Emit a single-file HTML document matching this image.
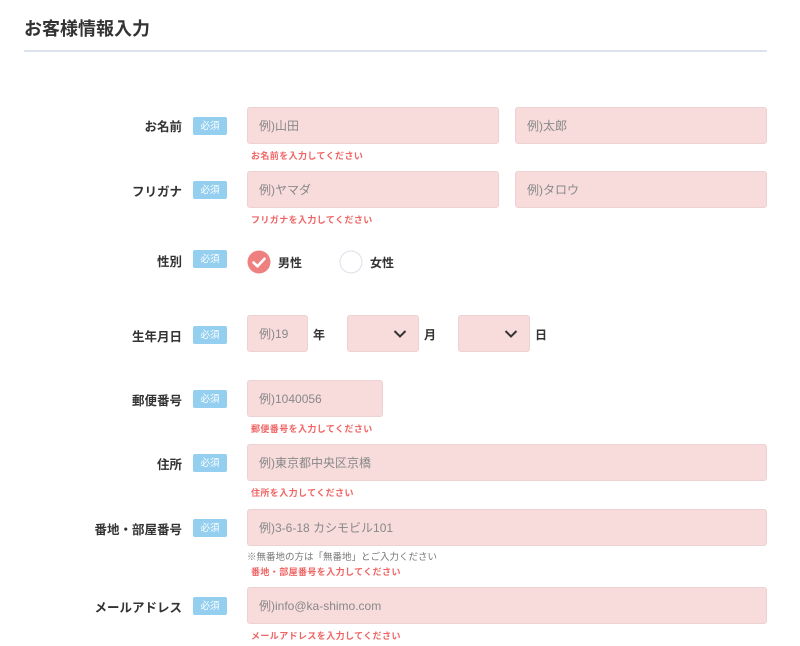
<!DOCTYPE html>
<html><head><meta charset="utf-8"><style>
*{box-sizing:border-box;margin:0;padding:0}
body{width:800px;height:646px;background:#fff;font-family:"Liberation Sans","Noto Sans CJK JP",sans-serif;position:relative;overflow:hidden;color:#333}
.a{position:absolute}
h1{position:absolute;left:24px;top:15px;font-size:18px;font-weight:bold;color:#333}
.line{position:absolute;left:24px;top:50px;width:743px;height:2px;background:#dde3ec}
.lbl{position:absolute;right:618px;font-size:12.5px;font-weight:bold;white-space:nowrap}
.bd{position:absolute;left:193px;width:34px;height:18px;background:#95cff0;color:#fff;font-size:9.5px;border-radius:2px;display:flex;align-items:center;justify-content:center;line-height:1;padding-top:2px}
.in{position:absolute;background:#f8dcdc;border:1px solid #ecd2d2;border-radius:3px;height:37px;font-size:12px;color:#888;padding-left:11px;line-height:37px;overflow:hidden;white-space:nowrap}
.err{position:absolute;left:251px;font-size:9px;letter-spacing:0.4px;color:#f06464;font-weight:bold}
.note{position:absolute;left:247px;font-size:9.5px;color:#777}
.ch{position:absolute;font-size:12px;font-weight:bold}
</style></head><body>
<h1>お客様情報入力</h1><div class="line"></div>

<div class="lbl" style="top:116px">お名前</div><div class="bd" style="top:117px">必須</div>
<div class="in" style="left:247px;top:107px;width:252px">例)山田</div>
<div class="in" style="left:515px;top:107px;width:252px">例)太郎</div>
<div class="err" style="top:149px">お名前を入力してください</div>

<div class="lbl" style="top:181px">フリガナ</div><div class="bd" style="top:181px">必須</div>
<div class="in" style="left:247px;top:171px;width:252px">例)ヤマダ</div>
<div class="in" style="left:515px;top:171px;width:252px">例)タロウ</div>
<div class="err" style="top:213px">フリガナを入力してください</div>

<div class="lbl" style="top:251px">性別</div><div class="bd" style="top:250px">必須</div>
<svg class="a" style="left:247px;top:250px" width="24" height="24"><circle cx="12" cy="12" r="11.5" fill="#ee8080"/><path d="M6.5 12.5l4 3.8 7-7.5" stroke="#fff" stroke-width="2.6" fill="none" stroke-linecap="round" stroke-linejoin="round"/></svg>
<div class="ch" style="left:278px;top:254px">男性</div>
<svg class="a" style="left:339px;top:250px" width="24" height="24"><circle cx="12" cy="12" r="11" fill="#fff" stroke="#dde0ea"/></svg>
<div class="ch" style="left:370px;top:254px">女性</div>

<div class="lbl" style="top:326px">生年月日</div><div class="bd" style="top:326px">必須</div>
<div class="in" style="left:247px;top:315px;width:61px">例)19</div>
<div class="ch" style="left:313px;top:326px">年</div>
<div class="in" style="left:347px;top:315px;width:72px"></div>
<svg class="a" style="left:393px;top:329px" width="14" height="10"><path d="M1.5 2l5.5 5.5 5.5-5.5" stroke="#333" stroke-width="2" fill="none"/></svg>
<div class="ch" style="left:424px;top:326px">月</div>
<div class="in" style="left:458px;top:315px;width:72px"></div>
<svg class="a" style="left:504px;top:329px" width="14" height="10"><path d="M1.5 2l5.5 5.5 5.5-5.5" stroke="#333" stroke-width="2" fill="none"/></svg>
<div class="ch" style="left:535px;top:326px">日</div>

<div class="lbl" style="top:390px">郵便番号</div><div class="bd" style="top:390px">必須</div>
<div class="in" style="left:247px;top:380px;width:136px">例)1040056</div>
<div class="err" style="top:422px">郵便番号を入力してください</div>

<div class="lbl" style="top:454px">住所</div><div class="bd" style="top:454px">必須</div>
<div class="in" style="left:247px;top:444px;width:520px">例)東京都中央区京橋</div>
<div class="err" style="top:486px">住所を入力してください</div>

<div class="lbl" style="top:519px">番地・部屋番号</div><div class="bd" style="top:519px">必須</div>
<div class="in" style="left:247px;top:509px;width:520px">例)3-6-18 カシモビル101</div>
<div class="note" style="top:549px">※無番地の方は「無番地」とご入力ください</div>
<div class="err" style="top:565px">番地・部屋番号を入力してください</div>

<div class="lbl" style="top:597px">メールアドレス</div><div class="bd" style="top:597px">必須</div>
<div class="in" style="left:247px;top:587px;width:520px">例)info@ka-shimo.com</div>
<div class="err" style="top:629px">メールアドレスを入力してください</div>
</body></html>
